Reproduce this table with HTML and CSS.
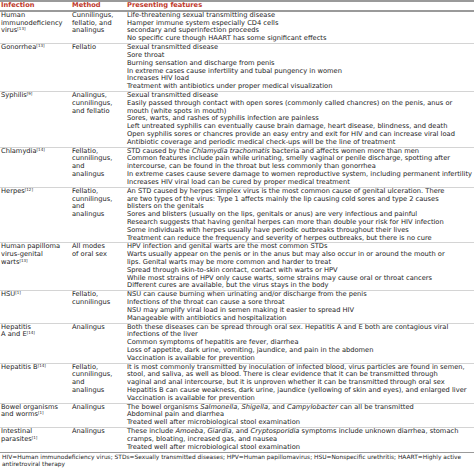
FILE: index.html
```html
<!DOCTYPE html>
<html>
<head>
<meta charset="utf-8">
<link rel="stylesheet" href="styles.css">
</head>
<body>
<table class="tbl">
<colgroup><col class="c1"><col class="c2"><col class="c3"></colgroup>
<thead>
<tr><th>Infection</th><th>Method</th><th>Presenting features</th></tr>
</thead>
<tbody>
<tr><td>Human<br>immunodeficiency<br>virus<sup>[13]</sup></td><td>Cunnilingus,<br>fellatio, and<br>analingus</td><td>Life-threatening sexual transmitting disease<br>Hamper immune system especially CD4 cells<br>secondary and superinfection proceeds<br>No specific cure though HAART has some significant effects</td></tr>
<tr><td>Gonorrhea<sup>[13]</sup></td><td>Fellatio</td><td>Sexual transmitted disease<br>Sore throat<br>Burning sensation and discharge from penis<br>In extreme cases cause infertility and tubal pungency in women<br>Increases HIV load<br>Treatment with antibiotics under proper medical visualization</td></tr>
<tr><td>Syphilis<sup>[9]</sup></td><td>Analingus,<br>cunnilingus,<br>and fellatio</td><td>Sexual transmitted disease<br>Easily passed through contact with open sores (commonly called chancres) on the penis, anus or<br>mouth (white spots in mouth)<br>Sores, warts, and rashes of syphilis infection are painless<br>Left untreated syphilis can eventually cause brain damage, heart disease, blindness, and death<br>Open syphilis sores or chancres provide an easy entry and exit for HIV and can increase viral load<br>Antibiotic coverage and periodic medical check-ups will be the line of treatment</td></tr>
<tr><td>Chlamydia<sup>[14]</sup></td><td>Fellatio,<br>cunnilingus,<br>and<br>analingus</td><td>STD caused by the <i>Chlamydia trachomatis</i> bacteria and affects women more than men<br>Common features include pain while urinating, smelly vaginal or penile discharge, spotting after<br>intercourse, can be found in the throat but less commonly than gonorrhea<br>In extreme cases cause severe damage to women reproductive system, including permanent infertility<br>Increases HIV viral load can be cured by proper medical treatment</td></tr>
<tr><td>Herpes<sup>[12]</sup></td><td>Fellatio,<br>cunnilingus,<br>and<br>analingus</td><td>An STD caused by herpes simplex virus is the most common cause of genital ulceration. There<br>are two types of the virus: Type 1 affects mainly the lip causing cold sores and type 2 causes<br>blisters on the genitals<br>Sores and blisters (usually on the lips, genitals or anus) are very infectious and painful<br>Research suggests that having genital herpes can more than double your risk for HIV infection<br>Some individuals with herpes usually have periodic outbreaks throughout their lives<br>Treatment can reduce the frequency and severity of herpes outbreaks, but there is no cure</td></tr>
<tr><td>Human papilloma<br>virus-genital<br>warts<sup>[13]</sup></td><td>All modes<br>of oral sex</td><td>HPV infection and genital warts are the most common STDs<br>Warts usually appear on the penis or in the anus but may also occur in or around the mouth or<br>lips. Genital warts may be more common and harder to treat<br>Spread through skin-to-skin contact, contact with warts or HPV<br>While most strains of HPV only cause warts, some strains may cause oral or throat cancers<br>Different cures are available, but the virus stays in the body</td></tr>
<tr><td>HSU<sup>[1]</sup></td><td>Fellatio,<br>cunnilingus</td><td>NSU can cause burning when urinating and/or discharge from the penis<br>Infections of the throat can cause a sore throat<br>NSU may amplify viral load in semen making it easier to spread HIV<br>Manageable with antibiotics and hospitalization</td></tr>
<tr><td>Hepatitis<br>A and E<sup>[14]</sup></td><td>Analingus</td><td>Both these diseases can be spread through oral sex. Hepatitis A and E both are contagious viral<br>infections of the liver<br>Common symptoms of hepatitis are fever, diarrhea<br>Loss of appetite, dark urine, vomiting, jaundice, and pain in the abdomen<br>Vaccination is available for prevention</td></tr>
<tr><td>Hepatitis B<sup>[14]</sup></td><td>Fellatio,<br>cunnilingus,<br>and<br>analingus</td><td>It is most commonly transmitted by inoculation of infected blood, virus particles are found in semen,<br>stool, and saliva, as well as blood. There is clear evidence that it can be transmitted through<br>vaginal and anal intercourse, but it is unproven whether it can be transmitted through oral sex<br>Hepatitis B can cause weakness, dark urine, jaundice (yellowing of skin and eyes), and enlarged liver<br>Vaccination is available for prevention</td></tr>
<tr><td>Bowel organisms<br>and worms<sup>[1]</sup></td><td>Analingus</td><td>The bowel organisms <i>Salmonella</i>, <i>Shigella</i>, and <i>Campylobacter</i> can all be transmitted<br>Abdominal pain and diarrhea<br>Treated well after microbiological stool examination</td></tr>
<tr><td>Intestinal<br>parasites<sup>[1]</sup></td><td>Analingus</td><td>These include <i>Amoeba</i>, <i>Giardia</i>, and <i>Cryptosporidia</i> symptoms include unknown diarrhea, stomach<br>cramps, bloating, increased gas, and nausea<br>Treated well after microbiological stool examination</td></tr>
</tbody>
</table>
<p class="foot">HIV=Human immunodeficiency virus; STDs=Sexually transmitted diseases; HPV=Human papillomavirus; HSU=Nonspecific urethritis; HAART=Highly active<br>antiretroviral therapy</p>
</body>
</html>
```
FILE: styles.css
```css
html, body {
  margin: 0;
  padding: 0;
  background: #ffffff;
}
body {
  width: 474px;
  overflow: hidden;
  font-family: "DejaVu Sans", sans-serif;
  font-size: 6.7px;
  line-height: 7.82px;
  color: #1c1c1c;
}
.tbl {
  border-collapse: collapse;
  width: 474px;
  table-layout: fixed;
}
.c1 { width: 71px; }
.c2 { width: 55px; }
.c3 { width: 348px; }
.tbl th, .tbl td {
  padding: 0 0 0 1px;
  text-align: left;
  vertical-align: top;
  white-space: nowrap;
  overflow: visible;
}
.tbl thead th {
  color: #c0392b;
  font-weight: bold;
  border-top: 2px solid #9a9a9a;
  border-bottom: 2px solid #9a9a9a;
}
.tbl tbody td {
  border-bottom: 1px solid #d4d4d4;
}
.tbl tbody tr:last-child td {
  border-bottom: 1px solid #9a9a9a;
}
sup {
  font-size: 4px;
  line-height: 0;
  vertical-align: 2px;
}
.foot {
  margin: 0;
  padding: 1px 0 0 2px;
  font-size: 5.9px;
  white-space: nowrap;
}
```
